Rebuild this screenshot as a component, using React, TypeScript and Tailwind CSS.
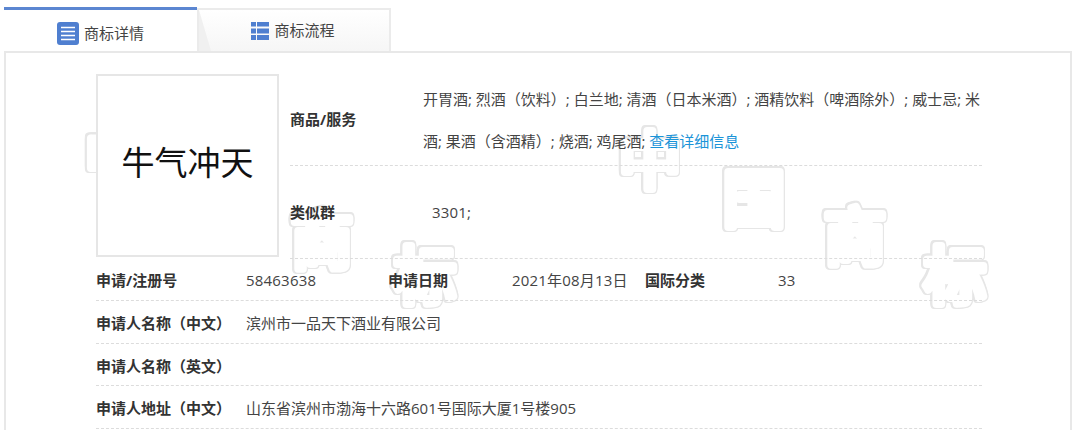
const font = "font-['Open_Sans','Noto_Sans_CJK_SC',sans-serif]";

const marks = [
  { t: "中", cls: "left-[66px] top-[108px]" },
  { t: "商", cls: "left-[272px] top-[192px]" },
  { t: "标", cls: "left-[375px] top-[227px]" },
  { t: "中", cls: "left-[600px] top-[112px]" },
  { t: "国", cls: "left-[704px] top-[150px]" },
  { t: "商", cls: "left-[805px] top-[188px]" },
  { t: "标", cls: "left-[905px] top-[227px]" },
];

function Watermark({ t, cls }: { t: string; cls: string }) {
  return (
    <svg
      className={`absolute ${cls} [filter:drop-shadow(1.5px_0_0_#e6e6e6)_drop-shadow(-1.5px_0_0_#e6e6e6)_drop-shadow(0_1.5px_0_#e6e6e6)_drop-shadow(0_-1.5px_0_#e6e6e6)]`}
      width="100"
      height="100"
      viewBox="0 0 100 100"
    >
      <text
        x="50"
        y="72"
        textAnchor="middle"
        fontSize="62"
        fill="#fff"
        stroke="#fff"
        strokeWidth="8"
        strokeLinejoin="round"
      >
        {t}
      </text>
    </svg>
  );
}

function Label({ children, className = "" }: { children: React.ReactNode; className?: string }) {
  return <span className={`text-[15px] font-bold text-[#333] ${className}`}>{children}</span>;
}

function Row({ label, value }: { label: string; value?: string }) {
  return (
    <div className="flex h-[42.7px] items-center border-b border-dashed border-[#dcdcdc] pt-[3px]">
      <Label className="w-[150px] shrink-0">{label}</Label>
      <span>{value}</span>
    </div>
  );
}

export default function App() {
  return (
    <div className={`relative h-[430px] w-[1080px] overflow-hidden bg-white text-[15px] text-[#444] ${font}`}>
      <div className="flex h-[51px] items-end pl-1 pr-2">
        <div className="flex h-[44px] w-[193px] shrink-0 items-center justify-center gap-[5px] border-t-[3px] border-[#5b86d1] bg-white pt-[5px]">
          <svg width="22" height="23" viewBox="0 0 22 23">
            <rect width="22" height="23" rx="3" fill="#4f7fd0" />
            <path d="M4 5.500h14M4 9.500h14M4 13.500h14M4 17.500h14" stroke="#fff" strokeWidth="1.600" />
          </svg>
          <span>商标详情</span>
        </div>
        <div className="relative flex h-[43px] w-[194px] shrink-0 items-center justify-center gap-[5px] border-x-2 border-t-2 border-[#ebebeb] bg-gradient-to-b from-white to-[#f6f6f6] pr-[2px]">
          <svg className="absolute bottom-0 left-0" width="12" height="41" viewBox="0 0 12 41">
            <path d="M0 0L12 41H0Z" fill="#f0f0f0" />
          </svg>
          <svg width="18" height="18" viewBox="0 0 18 18">
            <path d="M0 0h5v4.500H0zM6 0h12v4.500H6zM0 6.500h5v5H0zM6 6.500h12v5H6zM0 13h5v5H0zM6 13h12v5H6z" fill="#4f7fd0" />
          </svg>
          <span>商标流程</span>
        </div>
      </div>

      <div className="mx-1 mr-2 h-[400px] border-x-2 border-t-2 border-[#e8e8e8] pl-[90px] pt-[21px]">
        <div className="relative z-10 w-[886px]">
          <div className="flex h-[185px]">
            <div className="flex h-[183px] w-[183px] shrink-0 items-center justify-center border-2 border-[#e6e6e6] bg-white pb-[6px] text-[33px] text-[#111]">
              牛气冲天
            </div>
            <div className="ml-[11px] flex-1">
              <div className="flex h-[92px] items-center border-b border-dashed border-[#dcdcdc]">
                <Label className="w-[133px] shrink-0">商品/服务</Label>
                <p className="w-[559px] leading-[42px]">
                  开胃酒; 烈酒（饮料）; 白兰地; 清酒（日本米酒）; 酒精饮料（啤酒除外）; 威士忌; 米酒; 果酒（含酒精）; 烧酒; 鸡尾酒;{" "}
                  <span className="text-[#1b94d8]">查看详细信息</span>
                </p>
              </div>
              <div className="flex h-[93px] items-center border-b border-dashed border-[#dcdcdc]">
                <Label className="w-[142px] shrink-0">类似群</Label>
                <span className="tracking-[0.2px]">3301;</span>
              </div>
            </div>
          </div>
          <div className="flex h-[42px] items-center border-b border-dashed border-[#dcdcdc] pt-[2px]">
            <Label className="w-[150px] shrink-0">申请/注册号</Label>
            <span className="w-[142px] shrink-0 tracking-[0.2px]">58463638</span>
            <Label className="w-[124px] shrink-0">申请日期</Label>
            <span className="w-[133px] shrink-0 tracking-[0.2px]">2021年08月13日</span>
            <Label className="w-[133px] shrink-0">国际分类</Label>
            <span className="tracking-[0.2px]">33</span>
          </div>
          <Row label="申请人名称（中文）" value="滨州市一品天下酒业有限公司" />
          <Row label="申请人名称（英文）" />
          <Row label="申请人地址（中文）" value="山东省滨州市渤海十六路601号国际大厦1号楼905" />
        </div>
      </div>

      <div className="absolute inset-0">
        {marks.map((m, i) => (
          <Watermark key={i} t={m.t} cls={m.cls} />
        ))}
      </div>
    </div>
  );
}
